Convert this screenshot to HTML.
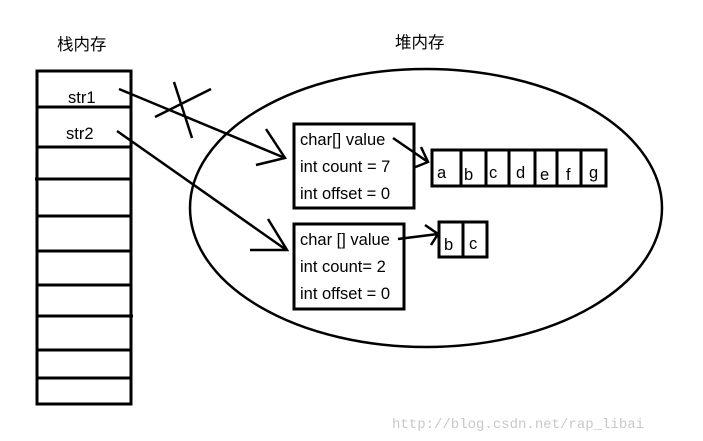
<!DOCTYPE html><html><head><style>body{margin:0;background:#fff}svg{display:block}text{font-family:"Liberation Sans","Noto Sans CJK SC",sans-serif;font-size:16.5px;fill:#000}</style></head><body>
<svg width="703" height="441" viewBox="0 0 703 441">
<g stroke="#000" stroke-width="3" fill="none">
<rect x="37" y="71" width="94" height="333"/>
<path d="M37 107H131M37 147H131M35 179H131M37 216H131M37 251H131M37 285H131M37 316H133M37 350H131M37 378H131"/>
<ellipse cx="426" cy="208" rx="236" ry="139" stroke-width="2.5"/>
<rect x="294" y="124" width="120" height="84"/>
<rect x="294" y="224" width="110" height="85"/>
<rect x="432" y="150" width="174" height="36"/>
<path d="M461 150V186M486 150V186M509 150V186M535 150V186M557 150V186M581 150V186"/>
<rect x="439" y="222" width="48" height="35"/>
<path d="M463 222V257"/>
<path d="M119 89L285 158M266 129L285 158L256 165" stroke-width="2.5"/>
<path d="M174 82L192 138M155 117L211 89" stroke-width="2.5"/>
<path d="M117 131L285 249M268 219L287 250L250 250" stroke-width="2.5"/>
<path d="M393 138L428 162M421 147L428 162L413 168" stroke-width="2.5"/>
<path d="M398 239L438 234M425 225L438 234L431 245" stroke-width="2.5"/>
</g>
<text x="57" y="50">栈内存</text><text x="395" y="48">堆内存</text>
<text x="68" y="103">str1</text><text x="66" y="139">str2</text>
<text x="300" y="145">char[] value</text><text x="300" y="172">int count = 7</text><text x="300" y="199">int offset = 0</text>
<text x="300" y="245">char [] value</text><text x="300" y="272">int count= 2</text><text x="300" y="299">int offset = 0</text>
<text x="437" y="178">a</text><text x="464" y="180">b</text><text x="489" y="178">c</text><text x="516" y="178">d</text><text x="540" y="180">e</text><text x="566" y="180">f</text><text x="589" y="178">g</text>
<text x="444" y="250">b</text><text x="469" y="249">c</text>
<text x="392" y="428" style="font-family:'Liberation Mono',monospace;font-size:14px;fill:#c8c8c8">http://blog.csdn.net/rap_libai</text>
</svg></body></html>
